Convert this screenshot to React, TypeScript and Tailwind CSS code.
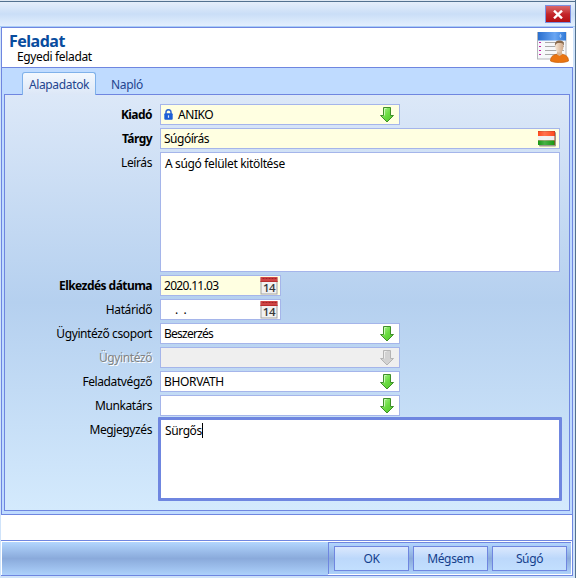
import React from 'react';

const ArrowIcon: React.FC<{ disabled?: boolean }> = ({ disabled }) => (
  <svg className="w-[14px] h-[16px] shrink-0" viewBox="0 0 14 16">
    <defs>
      <linearGradient id="arrowGreen" x1="0" y1="0" x2="1" y2="1">
        <stop offset="0" stopColor="#b6f59c" />
        <stop offset="0.5" stopColor="#6bdc42" />
        <stop offset="1" stopColor="#4cc025" />
      </linearGradient>
    </defs>
    <path
      d="M3.5 .5h7v8h3L7 15 .5 8.5h3z"
      fill={disabled ? '#d2d2d2' : 'url(#arrowGreen)'}
      stroke={disabled ? '#b4b4b4' : '#3f8f2a'}
    />
    <path d="M4.500 8.500v-7h2" fill="none" stroke={disabled ? '#ececec' : '#c9f9b5'} />
  </svg>
);

const CalendarIcon: React.FC = () => (
  <svg className="w-[18px] h-[18px] shrink-0" viewBox="0 0 18 18">
    <rect x="1" y="1" width="16" height="16" fill="#f1f1f1" stroke="#a3a3a3" />
    <rect x=".5" y="0" width="17" height="5" fill="#cf4545" />
    <path d="M.5 4.500h17" stroke="#b93030" />
    <path d="M2.500 1.500h14" stroke="#9c2626" strokeDasharray="2 1" />
    <text x="9" y="15.300" textAnchor="middle" fontSize="11.500" fontWeight="600" fill="#3a3a3a" fontFamily="Open Sans, sans-serif">
      14
    </text>
  </svg>
);

const LockIcon: React.FC = () => (
  <svg className="w-[9px] h-[11px] shrink-0" viewBox="0 0 9 11">
    <path d="M2 5V3a2.500 2.300 0 0 1 5 0v2" fill="none" stroke="#2f66cf" strokeWidth="1.500" />
    <rect x=".3" y="4.300" width="8.400" height="6.500" rx="1" fill="#1c5fd6" />
    <path d="M4.500 6.300v2.500" stroke="#dbe8ff" strokeWidth="1.200" />
  </svg>
);

const FlagIcon: React.FC = () => (
  <svg className="w-[18px] h-[16px] shrink-0" viewBox="0 0 18 16">
    <defs>
      <linearGradient id="flagShine" x1="0" y1="0" x2="1" y2="0">
        <stop offset="0" stopColor="#fff" stopOpacity="0" />
        <stop offset="0.4" stopColor="#fff" stopOpacity="0.22" />
        <stop offset="1" stopColor="#fff" stopOpacity="0" />
      </linearGradient>
    </defs>
    <rect x="1" y="1" width="17" height="14.500" rx="1" fill="#6f6f66" opacity=".7" />
    <rect width="17" height="14" fill="#b8381a" />
    <rect width="16.500" height="4.500" y=".5" fill="#ff4a1c" />
    <rect width="16.500" height="4.500" y="5" fill="#efefef" />
    <rect width="16.500" height="4.500" y="9.500" fill="#169a12" />
    <rect width="16.500" height="14" fill="url(#flagShine)" />
  </svg>
);

const TaskIcon: React.FC = () => (
  <svg className="w-[32px] h-[32px] shrink-0" viewBox="0 0 32 32">
    <defs>
      <linearGradient id="taskHead" x1="0" y1="0" x2="1" y2="0">
        <stop offset="0" stopColor="#2a6fce" />
        <stop offset="0.6" stopColor="#6aa6f3" />
        <stop offset="1" stopColor="#2f78d6" />
      </linearGradient>
      <linearGradient id="face" x1="0" y1="0" x2="1" y2="0">
        <stop offset="0" stopColor="#f9e8d6" />
        <stop offset="1" stopColor="#cfa888" />
      </linearGradient>
    </defs>
    <rect x=".5" y="1.500" width="28.500" height="26.500" fill="#f7f8fa" stroke="#b3b5ba" />
    <rect x="1" y="1" width="28" height="8.500" fill="url(#taskHead)" />
    <path d="M23.500 3v4M22 5h3" stroke="#a8cdfb" strokeWidth=".8" />
    <path d="M8 11.500h19M8 15.500h19M8 19.500h19M8 23.500h12" stroke="#a9a9a9" />
    <path d="M2 11.500h2M2 15.500h2M2 19.500h2M2 23.500h2" stroke="#c322a8" />
    <path d="M13.500 30c0-5 3.500-7 9-7s9 2 9 7c-4 2-14 2-18 0z" fill="#ea7512" stroke="#c85f08" strokeWidth=".7" />
    <path d="M20 19.500h5v4l-2.500 1.500-2.500-1.500z" fill="#d9b594" />
    <ellipse cx="22.300" cy="16" rx="4.100" ry="5.500" fill="url(#face)" />
    <path d="M18 15c-.5-4.500 2-5.500 4.500-5.500s5 1 4.500 5.500c-1-2.500-2-3-4.500-3s-3.500.5-4.500 3z" fill="#8a6a4c" />
  </svg>
);

interface RowProps {
  label: string;
  bold?: boolean;
  disabled?: boolean;
  children: React.ReactNode;
}

const Row: React.FC<RowProps> = ({ label, bold, disabled, children }) => (
  <div className="flex items-start">
    <div
      className={`w-[147px] mr-[8px] h-[21px] leading-[21px] shrink-0 text-right whitespace-nowrap ${
        bold ? 'font-bold tracking-[-0.550px]' : 'tracking-[-0.400px]'
      } ${disabled ? 'text-[#838383] [text-shadow:1px_1px_0_#fff]' : ''}`}
    >
      {label}
    </div>
    {children}
  </div>
);

const box = 'flex items-center h-[21px] border border-[#a5b5ea] pl-[3px] text-black whitespace-pre';

const App: React.FC = () => {
  return (
    <div className="w-[576px] h-[578px] flex flex-col overflow-hidden bg-[#cfe3fa] border-r border-[#53718f] font-['Noto_Sans','Open_Sans',sans-serif] text-[12px] tracking-[-0.350px] text-black">
      {/* Title bar */}
      <div className="h-[27px] shrink-0 border-t border-[#dfe8f2] flex flex-col">
        <div className="h-[26px] border-t border-t-[#53718f] border-b border-b-[#a9cdf8] bg-linear-to-b from-[#e5eefa] via-[#cadef7] to-[#e3effd] flex justify-end">
          <div className="w-[26px] h-[18px] mt-[3px] mr-[4px] border border-[#7b8fe0] bg-linear-to-b from-[#d9666b] via-[#c4262b] to-[#b40d12] flex items-center justify-center">
            <svg className="w-[10px] h-[9px]" viewBox="0 0 10 9">
              <path d="M1 .7l8 7.600M9 .7L1 8.300" stroke="#fff" strokeWidth="2.400" />
            </svg>
          </div>
        </div>
      </div>

      {/* Header */}
      <div className="ml-[1px] mr-[2px] h-[40px] shrink-0 border-t border-l border-[#6f86e0] bg-white flex justify-between">
        <div>
          <div className="pl-[7px] pt-[3px] h-[21px] leading-[20px] text-[16px] font-bold tracking-[-0.500px] text-[#084c9e]">Feladat</div>
          <div className="pl-[15px] leading-[15px]">Egyedi feladat</div>
        </div>
        <div className="pt-[3px] pr-[4px]">
          <TaskIcon />
        </div>
      </div>

      {/* Tabs and form */}
      <div className="ml-[1px] mr-[2px] h-[448px] shrink-0 border border-[#6f86e0] bg-[#bfdbff] px-[2px] flex flex-col">
        <div className="h-[26px] flex items-end pl-[18px] text-[#24458f]">
          <div className="relative z-10 w-[74px] h-[23px] -mb-px rounded-t-[3px] border border-b-0 border-[#7fb1ea] bg-linear-to-b from-[#f3f8fe] to-[#dce7f7] text-center leading-[24px]">
            Alapadatok
          </div>
          <div className="pl-[15px] h-[22px] leading-[25px]">Napló</div>
        </div>
        <div className="h-[417px] border border-[#6f86e0] bg-linear-to-b from-[#dce8f8] via-[#b5d0ef] to-[#d4eafd] pt-[9px] flex flex-col gap-[3px]">
          <Row label="Kiadó" bold>
            <div className={`${box} w-[240px] bg-[#ffffe1] justify-between pr-[5px]`}>
              <span className="flex items-center gap-[5px] tracking-[-0.450px]">
                <LockIcon />
                ANIKO
              </span>
              <ArrowIcon />
            </div>
          </Row>
          <Row label="Tárgy" bold>
            <div className={`${box} w-[400px] bg-[#ffffe1] justify-between pr-[3px] tracking-[-0.500px]`}>
              Súgóírás
              <FlagIcon />
            </div>
          </Row>
          <Row label="Leírás">
            <div className="w-[400px] h-[120px] border border-[#a5b5ea] bg-white pl-[4px] leading-[21px]">
              A súgó felület kitöltése
            </div>
          </Row>
          <Row label="Elkezdés dátuma" bold>
            <div className={`${box} w-[121px] bg-[#ffffe1] justify-between pr-[2px] tracking-[-0.700px]`}>
              2020.11.03
              <CalendarIcon />
            </div>
          </Row>
          <Row label="Határidő">
            <div className={`${box} w-[121px] bg-white justify-between pr-[2px]`}>
              {'    .  .'}
              <CalendarIcon />
            </div>
          </Row>
          <Row label="Ügyintéző csoport">
            <div className={`${box} w-[240px] bg-white justify-between pr-[5px] tracking-[-0.750px]`}>
              Beszerzés
              <ArrowIcon />
            </div>
          </Row>
          <Row label="Ügyintéző" disabled>
            <div className={`${box} w-[240px] bg-[#efefef] justify-end pr-[5px]`}>
              <ArrowIcon disabled />
            </div>
          </Row>
          <Row label="Feladatvégző">
            <div className={`${box} w-[240px] bg-white justify-between pr-[5px]`}>
              BHORVATH
              <ArrowIcon />
            </div>
          </Row>
          <Row label="Munkatárs">
            <div className={`${box} w-[240px] bg-white justify-end pr-[5px]`}>
              <ArrowIcon />
            </div>
          </Row>
          <Row label="Megjegyzés">
            <div className="-ml-[2px] -mt-[2px] w-[404px] h-[84px] rounded-[1px] border-[3px] border-[#6f86e0] bg-white pl-[4px] pt-[2px]">
              <span className="inline-block h-[15px] leading-[15px] border-r border-black tracking-[-0.400px]">Sürgős</span>
            </div>
          </Row>
        </div>
      </div>

      {/* Status line */}
      <div className="ml-[1px] mr-[2px] h-[25px] shrink-0 border-r border-[#6f86e0] bg-white"></div>

      {/* Button bar */}
      <div className="ml-[1px] mr-[2px] h-[36px] shrink-0 border-y border-r border-[#6f86e0] bg-white pt-px pl-px flex">
        <div className="w-[326px] h-[33px] bg-linear-to-b from-[#b3d6fe] via-[#8aaadb] to-[#add1fb]"></div>
        <div className="w-[243px] h-[32px] border-t border-l border-[#6f86e0] bg-linear-to-b from-[#b3d6fe] via-[#8aaadb] to-[#add1fb] flex gap-[4px] pl-[5px] pt-[3px] text-[#153f8c]">
          {['OK', 'Mégsem', 'Súgó'].map((name) => (
            <div
              key={name}
              className="w-[75px] h-[25px] border border-[#6f86e0] bg-linear-to-b from-[#dbe8fd] via-[#bcd8fb] to-[#c2dffe] text-center leading-[24px]"
            >
              {name}
            </div>
          ))}
        </div>
      </div>
    </div>
  );
};

export default App;
